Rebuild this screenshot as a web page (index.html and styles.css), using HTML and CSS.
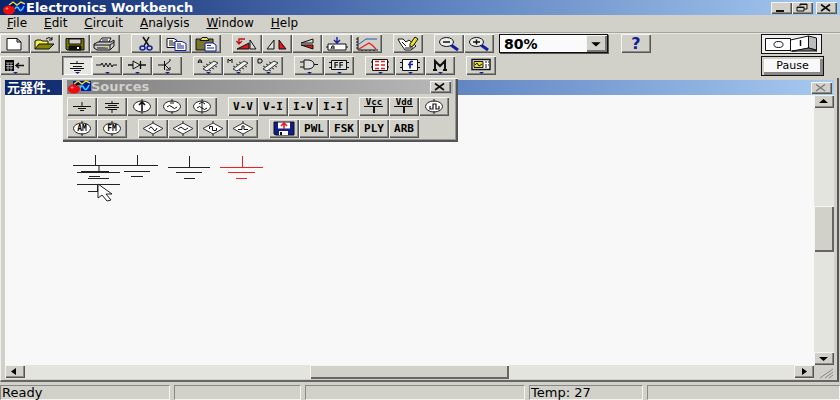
FILE: index.html
```
<!DOCTYPE html>
<html lang="en">
<head>
    <meta charset="UTF-8">
    <meta name="viewport" content="width=device-width, initial-scale=1.0">
    <title>Electronics Workbench</title>
    <link rel="stylesheet" href="styles.css">
</head>
<body>
    <svg class="defs" width="0" height="0">
        <symbol id="logo" viewBox="0 0 24 14">
            <path d="M6 1H24V11H14V5H6Z" fill="#0018a8"/>
            <path d="M7 4l4-3 4 3 4-3 4 2" fill="none" stroke="#e8e020" stroke-width="1.4"/>
            <path d="M13 8q2-4 4 0t5-3" fill="none" stroke="#30d8f0" stroke-width="1.6"/>
            <ellipse cx="7" cy="9" rx="6" ry="4.5" fill="#f00c0c"/>
            <path d="M9 5l3-2" stroke="#000" stroke-width="1.5"/>
            <ellipse cx="5" cy="7.500" rx="1.500" ry="1" fill="#ff9a8a"/>
        </symbol>
        <symbol id="nub" viewBox="0 0 30 19"><path d="M13 16h5l-2.500 2z" fill="#102090" stroke="none"/></symbol>
        <symbol id="chip" viewBox="0 0 30 19">
            <path d="M10 13l11-8 4 2-11 8z" fill="#eee" stroke="#333"/>
            <path d="M12 11l-2-1M15 9l-2-1M18 7l-2-1M16 14l2 1M19 12l2 1M22 10l2 1" fill="none" stroke="#333"/>
        </symbol>
        <symbol id="round" viewBox="0 0 30 19">
            <ellipse cx="15" cy="9.500" rx="8.500" ry="5.500" fill="#fff" stroke="#222"/>
            <path d="M15 2v3M15 14v3" stroke="#222"/>
        </symbol>
        <symbol id="diamond" viewBox="0 0 30 19">
            <path d="M5 9.500L15 4l10 5.500L15 15z" fill="#fff" stroke="#333"/>
            <path d="M15 2v2M15 15v2" stroke="#222"/>
        </symbol>
    </svg>

    <header class="titlebar">
        <svg class="logo"><use href="#logo"/></svg>
        <h1>Electronics Workbench</h1>
        <div class="window-buttons">
            <button class="small" aria-label="Minimize"><svg viewBox="0 0 20 12"><path d="M5 9h8" stroke-width="2"/></svg></button>
            <button class="small" aria-label="Restore"><svg viewBox="0 0 20 12"><path d="M8 4V2h7v5h-3M8 2.500h7M5 5h7v4H5zM5 5.500h7"/></svg></button>
            <button class="small close" aria-label="Close"><svg viewBox="0 0 20 12"><path d="M5 2.500l9 6.500M14 2.500L5 9" stroke-width="1.700"/></svg></button>
        </div>
    </header>

    <nav class="menu">
        <a href="#"><u>F</u>ile</a>
        <a href="#"><u>E</u>dit</a>
        <a href="#"><u>C</u>ircuit</a>
        <a href="#"><u>A</u>nalysis</a>
        <a href="#"><u>W</u>indow</a>
        <a href="#"><u>H</u>elp</a>
    </nav>

    <div class="toolbars">
        <div class="rows">
            <div class="bar">
                <div class="group">
                    <button class="tool" aria-label="New"><svg viewBox="0 0 30 19"><path d="M7 4.500h10l4 3.500v8H7zM17 4.500V8h4" fill="#fff"/></svg></button>
                    <button class="tool" aria-label="Open"><svg viewBox="0 0 30 19"><path d="M5 15V7l2-1h4l1 1h6v3" fill="#f4ee50"/><path d="M5 15l4-5h15l-5 5z" fill="#858500"/><path d="M16 5q3-3 6 0M22 3v3h-3"/></svg></button>
                    <button class="tool" aria-label="Save"><svg viewBox="0 0 30 19"><path d="M6 4.500h18v11.500H7l-1-1z" fill="#777700"/><path d="M9 5h12v5H9z" fill="#d4d0c8"/><path d="M9 12h12v4H9z" fill="#111"/><path d="M18 13v2" stroke="#fff" stroke-width="2"/></svg></button>
                    <button class="tool" aria-label="Print"><svg viewBox="0 0 30 19"><path d="M9 8l3-4h9l-2 4z" fill="#fff"/><path d="M4 10l4-2h13l3-2v6l-4 4H7l-3-2z" fill="#ccc"/><path d="M4 11h16l4-3M20 11v5M7 14h11M12 6h6"/><path d="M15 13h3" stroke="#d8d020"/></svg></button>
                </div>
                <div class="group">
                    <button class="tool" aria-label="Cut"><svg viewBox="0 0 30 19"><path d="M12 3l6 9M18 3l-5 9" stroke-width="1.500"/><g stroke="#1020a0" stroke-width="1.500"><ellipse cx="11.500" cy="14" rx="2.500" ry="2"/><ellipse cx="18.500" cy="14" rx="2.500" ry="2"/></g></svg></button>
                    <button class="tool" aria-label="Copy"><svg viewBox="0 0 30 19"><path d="M6 4.500h7l3 2v7H6z" fill="#fff"/><path d="M8 7h4M8 9h6M8 11h6"/><g stroke="#1020a0"><path d="M14 7.500h7l4 2v7H14z" fill="#fff"/><path d="M16 10h4M16 12h7M16 14h7"/></g></svg></button>
                    <button class="tool" aria-label="Paste"><svg viewBox="0 0 30 19"><path d="M5 5h17v11H5z" fill="#77772c"/><path d="M9 6.500h9l-2-3h-5z" fill="#e8e060"/><g stroke="#1020a0"><path d="M14 9h8l3 2v6H14z" fill="#fff"/><path d="M16 11.500h4M16 14h7"/></g></svg></button>
                </div>
                <div class="group">
                    <button class="tool" aria-label="Rotate"><svg viewBox="0 0 30 19"><path d="M5 15h12V9z" fill="#e01818"/><path d="M18 15V6l6 9z" fill="#ddd"/><path d="M13 5H7v4M4.500 7L7 10l3-3" stroke="#c01010" stroke-width="1.400"/></svg></button>
                    <button class="tool" aria-label="Flip horizontal"><svg viewBox="0 0 30 19"><path d="M5 15h7V6z" fill="#ddd"/><path d="M17 15V6l7 9z" fill="#e01818"/></svg></button>
                    <button class="tool" aria-label="Flip vertical"><svg viewBox="0 0 30 19"><path d="M9 9l12-4v4z" fill="#ddd"/><path d="M9 11h12v4z" fill="#e01818"/></svg></button>
                    <button class="tool" aria-label="Component properties"><svg viewBox="0 0 30 19"><path d="M6 10h18v6H6zM4 13h2M24 13h2" fill="#fff"/><path d="M9 15l1-3h2v3M10 14h2"/><path d="M15 3v5M12 6l3 3 3-3" stroke="#1020a0" stroke-width="1.400"/></svg></button>
                    <button class="tool" aria-label="Display graphs"><svg viewBox="0 0 30 19"><path d="M6 3v13h20M4 5h2M4 8h2M4 11h2M4 14h2M10 16v1M14 16v1M18 16v1M22 16v1"/><path d="M7 10l7-5h11" stroke="#2858b0"/><path d="M7 15l10-6 3 2 4 4" stroke="#e02020" stroke-width="1.300"/></svg></button>
                </div>
                <div class="group">
                    <button class="tool" aria-label="Create subcircuit"><svg viewBox="0 0 30 19"><path d="M5 5h5l3 3 3-2 7 6-5 4h-6l-5-7z" fill="#fff"/><path d="M9 8l4 4M12 14h8"/><path d="M17 10l5-7 3 2-5 7-3 1z" fill="#f0e020"/></svg></button>
                </div>
                <div class="group">
                    <button class="tool" aria-label="Zoom out"><svg viewBox="0 0 30 19"><path d="M17 11l7 5" stroke="#1020a0" stroke-width="3"/><ellipse cx="12.500" cy="8" rx="7" ry="4.500" fill="#eee"/><path d="M9 8h7" stroke-width="1.500"/></svg></button>
                    <button class="tool" aria-label="Zoom in"><svg viewBox="0 0 30 19"><path d="M17 11l7 5" stroke="#1020a0" stroke-width="3"/><ellipse cx="12.500" cy="8" rx="7" ry="4.500" fill="#eee"/><path d="M9 8h7M12.500 5.500v5" stroke-width="1.500"/></svg></button>
                </div>
                <div class="combo">
                    <select aria-label="Zoom level"><option>80%</option><option>100%</option></select>
                    <span class="drop"><svg viewBox="0 0 20 17"><path class="solid" d="M5 7h9l-4.500 4z"/></svg></span>
                </div>
                <button class="tool help" aria-label="Help"><b>?</b></button>
            </div>

            <div class="bar">
                <div class="group first">
                    <button class="tool" aria-label="Favorites"><svg viewBox="0 0 30 19"><path class="solid" d="M5 4h9v11H5z"/><path d="M6 7h7M6 9.500h7M6 12h7M8 7v8M11 7v8" stroke="#ccc" stroke-width=".8"/><path d="M16 9.500h8M19 7l-3 2.500 3 2.500" stroke-width="1.500"/><use href="#nub"/></svg></button>
                </div>
                <div class="group">
                    <button class="tool pressed" aria-label="Sources"><svg viewBox="0 0 30 19"><path d="M15 5v2M8 7.500h14M11 10.500h9M8 12.500h14M12 14.500h7"/><use href="#nub"/></svg></button>
                    <button class="tool" aria-label="Basic"><svg viewBox="0 0 30 19"><path d="M4 9h5l1-2 2 4 2-4 2 4 2-4 2 4 1-2h4"/><use href="#nub"/></svg></button>
                    <button class="tool" aria-label="Diodes"><svg viewBox="0 0 30 19"><path d="M6 9h6M19 9h5M18.500 5v8" stroke-width="1.300"/><path d="M11 5v8l7-4z" fill="#ddd"/><use href="#nub"/></svg></button>
                    <button class="tool" aria-label="Transistors"><svg viewBox="0 0 30 19"><path d="M6 9h6M12.500 5v9M13 9l5-4V3M13 9l4 4M14 14h4v-3"/><use href="#nub"/></svg></button>
                </div>
                <div class="group">
                    <button class="tool" aria-label="Analog ICs"><svg viewBox="0 0 30 19"><use href="#chip"/><path d="M5 7l1-3h2l1 3M5 6h4"/><use href="#nub"/></svg></button>
                    <button class="tool" aria-label="Mixed ICs"><svg viewBox="0 0 30 19"><use href="#chip"/><path d="M5 7V3l2 2 2-2v4"/><use href="#nub"/></svg></button>
                    <button class="tool" aria-label="Digital ICs"><svg viewBox="0 0 30 19"><use href="#chip"/><path d="M5 3h3l1 1v2l-1 1H5z"/><use href="#nub"/></svg></button>
                </div>
                <div class="group">
                    <button class="tool" aria-label="Logic gates"><svg viewBox="0 0 30 19"><path d="M6 6h4M6 11h4M20 8.500h4"/><path d="M10 4h5q5 1 5 4.500t-5 4.500h-5z" fill="#ddd"/><use href="#nub"/></svg></button>
                    <button class="tool" aria-label="Digital"><svg viewBox="0 0 30 19"><path d="M7.500 4.500h15v9h-15z" fill="#ddd"/><path d="M5 6.500h3M5 11.500h3M22 6.500h3M22 11.500h3M11 12V6.500h3M11 9h3M16 12V6.500h3M16 9h3" stroke-width="1.200"/><use href="#nub"/></svg></button>
                </div>
                <div class="group">
                    <button class="tool" aria-label="Indicators"><svg viewBox="0 0 30 19"><path d="M7.500 3.500h15v11h-15z" fill="#fff"/><path d="M10 5.500h4M16 5.500h4M10 9h4M16 9h4M10 12.500h4M16 12.500h4" stroke="#e02020" stroke-width="1.500"/><path d="M6 6h2M6 11h2M22 6h2M22 11h2"/><use href="#nub"/></svg></button>
                    <button class="tool" aria-label="Controls"><svg viewBox="0 0 30 19"><path d="M7.500 3.500h15v11h-15zM5 6.500h3M5 11.500h3M22 6.500h3M22 11.500h3" fill="#fff"/><path d="M18 5.500h-2l-1 1v6M13 8.500h5" stroke="#1020a0" stroke-width="1.700"/><use href="#nub"/></svg></button>
                    <button class="tool" aria-label="Miscellaneous"><svg viewBox="0 0 30 19"><path d="M10 14V5l5 5 5-5v9M8 14h4M18 14h4" stroke-width="2"/><use href="#nub"/></svg></button>
                </div>
                <div class="group">
                    <button class="tool" aria-label="Instruments"><svg viewBox="0 0 30 19"><path d="M6 3.500h18v10H6z" fill="#fff" stroke-width="1.400"/><path d="M8 5.500h9v6H8z" fill="#e8e020"/><path d="M9 9l2-2 2 3 3-2M19 6h2M22 6h1M19 9h2M22 9h1M19 11h2"/><use href="#nub"/></svg></button>
                </div>
            </div>
        </div>

        <div class="simulate">
            <button class="power" aria-label="Activate simulation">
                <svg viewBox="0 0 59 18">
                    <path d="M3.500 3.500h25v12h-25z" fill="#fff"/>
                    <path d="M28.500 5l18-4v12l-13 3h-5z" fill="#fff"/>
                    <path d="M46.500 1l8 2v12l-8-2z" fill="#bbb"/>
                    <path d="M30 16l17-3 8 3z" fill="#777"/>
                    <ellipse cx="16.500" cy="9.500" rx="4.500" ry="3"/>
                    <path d="M38.500 5v6" stroke-width="1.500"/>
                </svg>
            </button>
            <button class="pause">Pause</button>
        </div>
    </div>

    <main class="workspace">
        <section class="document">
            <div class="doc-title">
                <h2>元器件.</h2>
                <button class="small" disabled aria-label="Close document"><svg viewBox="0 0 20 12"><path d="M5 2.500l9 6.500M14 2.500L5 9" stroke="#777" stroke-width="1.300"/></svg></button>
            </div>
            <div class="doc-body">
                <div class="sheet">
                    <svg class="circuit" width="210" height="60" viewBox="70 150 210 60">
                        <path d="M95.500 155v10M137.500 155v10M73 165.500h85M99 165v7M81 171.500h28M77 172.500h43M89 176.500h11M88 178.500h21M124 171.500h26M131 176.500h12M77 184.500h43M97.500 184v7M88 191.500h10"/>
                        <path d="M189.500 156v11M168 167.500h42M176 172.500h26M184 178.500h11"/>
                        <path class="selected" d="M242.500 156v11M220 167.500h43M228 172.500h27M236 178.500h11"/>
                        <path class="cursor" d="M98 184v14l4-3 5 6 4-1-5-6h6z"/>
                    </svg>
                </div>
                <div class="vscroll">
                    <button class="arrow" aria-label="Scroll up"><svg viewBox="0 0 20 13"><path class="solid" d="M5 8h9L9.500 4z"/></svg></button>
                    <div class="track"><div class="thumb"></div></div>
                    <button class="arrow" aria-label="Scroll down"><svg viewBox="0 0 20 13"><path class="solid" d="M5 5h9L9.500 9z"/></svg></button>
                </div>
                <div class="hscroll">
                    <button class="arrow" aria-label="Scroll left"><svg viewBox="0 0 20 13"><path class="solid" d="M11 3v7L6 6.500z"/></svg></button>
                    <div class="track"><div class="thumb"></div></div>
                    <button class="arrow" aria-label="Scroll right"><svg viewBox="0 0 20 13"><path class="solid" d="M8 3v7l5-3.500z"/></svg></button>
                </div>
                <svg class="grip" viewBox="0 0 20 14"><path d="M6 13L19 4M11 13l8-6M15 13l4-3"/></svg>
            </div>
        </section>

        <!-- floating parts bin -->
        <section class="palette">
            <div class="palette-title">
                <svg class="logo"><use href="#logo"/></svg>
                <h2>Sources</h2>
                <button class="small" aria-label="Close Sources"><svg viewBox="0 0 20 12"><path d="M5 2.500l9 6.500M14 2.500L5 9" stroke-width="1.700"/></svg></button>
            </div>
            <div class="bar">
                <div class="group">
                    <button class="tool" aria-label="Ground"><svg viewBox="0 0 30 19"><path d="M15 5v5M6 9.500h18M11 11.500h8M13 13.500h4"/></svg></button>
                    <button class="tool" aria-label="Battery"><svg viewBox="0 0 30 19"><path d="M15 4v2M8 6.500h14M11 8.500h9M8 10.500h14M11 12.500h9M15 13v3"/></svg></button>
                    <button class="tool" aria-label="DC current source"><svg viewBox="0 0 30 19"><use href="#round"/><path d="M15 14V5M12 8l3-3 3 3" stroke-width="1.600"/></svg></button>
                    <button class="tool" aria-label="AC voltage source"><svg viewBox="0 0 30 19"><use href="#round"/><path d="M10 10q2.500-3 5 0t5 0M13 6h4"/></svg></button>
                    <button class="tool" aria-label="AC current source"><svg viewBox="0 0 30 19"><use href="#round"/><path d="M15 14V5M12 7l3-2 3 2M10 11q2.500-3 5 0t5 0"/></svg></button>
                </div>
                <div class="group">
                    <button class="tool">V-V</button>
                    <button class="tool">V-I</button>
                    <button class="tool">I-V</button>
                    <button class="tool">I-I</button>
                </div>
                <div class="group">
                    <button class="tool supply"><span>Vcc</span></button>
                    <button class="tool supply"><span>Vdd</span></button>
                    <button class="tool" aria-label="Clock"><svg viewBox="0 0 30 19"><use href="#round"/><path d="M11 9v3h3V7h3v5h3V9" stroke-width="1.200"/></svg></button>
                </div>
            </div>
            <div class="bar">
                <div class="group">
                    <button class="tool modulated"><svg viewBox="0 0 30 19"><use href="#round"/></svg><span>AM</span></button>
                    <button class="tool modulated"><svg viewBox="0 0 30 19"><use href="#round"/></svg><span>FM</span></button>
                </div>
                <div class="group">
                    <button class="tool" aria-label="Voltage controlled sine wave"><svg viewBox="0 0 30 19"><use href="#diamond"/><path d="M11 10q2-4 4 0t4-1"/></svg></button>
                    <button class="tool" aria-label="Voltage controlled triangle wave"><svg viewBox="0 0 30 19"><use href="#diamond"/><path d="M10 10l3-2 4 3 3-2"/></svg></button>
                    <button class="tool" aria-label="Voltage controlled square wave"><svg viewBox="0 0 30 19"><use href="#diamond"/><path d="M11.500 10V7.500h3v4h4V9"/></svg></button>
                    <button class="tool" aria-label="Controlled one-shot"><svg viewBox="0 0 30 19"><use href="#diamond"/><path d="M10 10.500h4V7h2v3.500h4"/></svg></button>
                </div>
                <div class="group">
                    <button class="tool" aria-label="Piecewise linear source"><svg viewBox="0 0 30 19"><path d="M5 3h20v13H7l-2-1z" fill="#101c88"/><path class="white" d="M9 3.500h12v6H9z"/><path class="white" d="M10 12h9v4h-9z"/><path d="M12 13v3" stroke-width="2"/><path d="M15 10V4M12 7l3-3 3 3" stroke="#f01818" stroke-width="1.600"/></svg></button>
                    <button class="tool">PWL</button>
                    <button class="tool">FSK</button>
                    <button class="tool">PLY</button>
                    <button class="tool">ARB</button>
                </div>
            </div>
        </section>
    </main>

    <footer class="status">
        <div>Ready</div>
        <div></div>
        <div></div>
        <div>Temp: 27</div>
        <div></div>
    </footer>
</body>
</html>
```
FILE: styles.css
```
* {
    box-sizing: border-box;
}

body {
    margin: 0;
    height: 100vh;
    display: flex;
    flex-direction: column;
    overflow: hidden;
    background: #d1d0c9;
    color: #000;
    font: 12px "DejaVu Sans", "Noto Sans CJK SC", sans-serif;
}

h1, h2 {
    margin: 0;
    font-size: 13px;
    line-height: 14px;
    font-weight: bold;
}

svg {
    display: block;
    fill: none;
    stroke: #111;
}

button {
    padding: 0;
    border: 0;
    color: #000;
    background: #d1d0c9;
    font-family: inherit;
    box-shadow: inset 1px 1px #f4f4f0, inset -1px -1px #555, inset -2px -2px #8b8b88;
}

.defs {
    position: absolute;
}

.solid {
    fill: #000;
    stroke: none;
}

.white {
    fill: #fff;
    stroke: none;
}

.logo {
    width: 24px;
    height: 14px;
    stroke: none;
}

/* title and menu */
.titlebar {
    display: flex;
    align-items: center;
    height: 15px;
    padding: 0 3px 0 2px;
    color: #fff;
    background: linear-gradient(to right, #0a246a, #5b7fbd 50%, #a6caf0);
}

.window-buttons {
    display: flex;
    margin-left: auto;
}

.small {
    width: 21px;
    height: 12px;
}

.small svg {
    width: 20px;
    height: 12px;
}

.close {
    margin-left: 3px;
}

.menu {
    display: flex;
    gap: 17px;
    height: 17px;
    padding: 0 7px;
    line-height: 17px;
}

.menu a {
    color: #000;
    text-decoration: none;
}

/* toolbars */
.toolbars {
    display: flex;
    justify-content: space-between;
    padding: 1px 16px 2px 0;
    border-top: 1px solid #a5a5a0;
    box-shadow: inset 0 1px #e8e8e4;
}

.rows {
    display: flex;
    flex-direction: column;
    gap: 3px;
}

.bar {
    display: flex;
    align-items: center;
    gap: 11px;
    height: 19px;
}

.group {
    display: flex;
}

.tool {
    width: 30px;
    height: 19px;
    font: bold 11px "DejaVu Sans Mono", monospace;
}

.tool svg {
    width: 30px;
    height: 19px;
}

.first {
    margin-right: 21px;
}

.pressed {
    background: #e6e6e2;
    box-shadow: inset 1px 1px #555, inset 2px 2px #999, inset -1px -1px #fff;
}

.combo {
    display: flex;
    width: 109px;
    height: 19px;
    margin-left: -6px;
    border: 1px solid #111;
    background: #fafafa;
    box-shadow: 1px 1px #555;
}

.combo select {
    flex: 1;
    padding: 0 0 0 4px;
    border: 0;
    appearance: none;
    background: none;
    color: #000;
    font: bold 14px "DejaVu Sans", sans-serif;
}

.drop {
    width: 21px;
    background: #d1d0c9;
    box-shadow: inset 1px 1px #f4f4f0, inset -2px -2px #777;
}

.help {
    margin-left: 2px;
}

.help b {
    color: #101c98;
    font: bold 16px/18px "DejaVu Sans", sans-serif;
}

.simulate {
    display: flex;
    flex-direction: column;
    align-items: flex-start;
    gap: 2px;
}

.power {
    width: 61px;
    height: 20px;
    border: 1px solid #111;
    background: #eee;
    box-shadow: none;
}

.power svg {
    width: 59px;
    height: 18px;
}

.pause {
    width: 63px;
    height: 20px;
    border: 1px solid #111;
    background: #f8f8f8;
    font-size: 11px;
    line-height: 16px;
    box-shadow: inset 2px 2px #d1d0c9, inset -3px -3px #888;
}

/* document window */
.workspace {
    position: relative;
    flex: 1;
    min-height: 0;
    display: flex;
}

.document {
    flex: 1;
    min-width: 0;
    display: flex;
    flex-direction: column;
    padding: 2px 3px 1px 4px;
    margin-right: 1px;
    border-left: 1px solid #f0f0ec;
    border-right: 2px solid #555;
    border-bottom: 2px solid #666;
}

.doc-title {
    display: flex;
    align-items: center;
    justify-content: space-between;
    height: 15px;
    padding: 0 2px;
    color: #fff;
    background: linear-gradient(to right, #0a246a, #5b7fbd 50%, #a6caf0);
}

.doc-body {
    flex: 1;
    min-height: 0;
    display: grid;
    grid-template-columns: 1fr 20px;
    grid-template-rows: 1fr 14px;
}

.sheet {
    position: relative;
    background: #f8f8f8;
}

.circuit {
    position: absolute;
    left: 65px;
    top: 55px;
}

.circuit path {
    stroke: #222;
}

.circuit .selected {
    stroke: #f02020;
}

.circuit .cursor {
    fill: #fff;
}

.vscroll, .hscroll {
    display: flex;
    background: #e4e4df;
}

.vscroll {
    flex-direction: column;
}

.track {
    flex: 1;
    display: flex;
}

.vscroll .track {
    flex-direction: column;
}

.track::before {
    content: "";
}

.thumb {
    background: #d1d0c9;
    box-shadow: inset 1px 1px #f4f4f0, inset -2px -2px #666;
}

.vscroll .track::before {
    height: 40%;
}

.vscroll .thumb {
    height: 19%;
}

.hscroll .track::before {
    width: 37%;
}

.hscroll .thumb {
    width: 26%;
}

.arrow {
    flex: none;
    width: 20px;
    height: 13px;
}

.arrow svg {
    width: 20px;
    height: 13px;
}

.grip {
    width: 20px;
    height: 14px;
    background: #d1d0c9;
    stroke: #888;
}

/* floating Sources palette */
.palette {
    position: absolute;
    left: 62px;
    top: 0;
    display: flex;
    flex-direction: column;
    gap: 3px;
    width: 396px;
    padding: 2px 5px 4px;
    background: #d1d0c9;
    box-shadow: inset 1px 1px #f4f4f0, inset -2px -2px #555, inset -3px -3px #999;
}

.palette-title {
    display: flex;
    align-items: center;
    height: 14px;
    color: #d1d0c9;
    background: linear-gradient(to right, #808080, #b8b8b8);
}

.palette-title .small {
    margin-left: auto;
    margin-right: 2px;
}

.supply {
    background-image: linear-gradient(#111, #111), linear-gradient(#111, #111);
    background-repeat: no-repeat;
    background-size: 19px 1px, 2px 7px;
    background-position: 5px 9px, 14px 9px;
}

.supply span {
    display: block;
    height: 17px;
    font-size: 9px;
    line-height: 9px;
}

/* letters drawn inside the source circle */
.modulated {
    display: grid;
    place-items: center;
    font-size: 8px;
}

.modulated svg, .modulated span {
    grid-area: 1 / 1;
}

/* status bar */
.status {
    display: grid;
    grid-template-columns: 170fr 127fr 220fr 114fr 193fr;
    gap: 4px;
    height: 18px;
    padding: 3px 0 1px;
    font-size: 13px;
    line-height: 13px;
}

.status div {
    padding-left: 1px;
    border: 1px solid;
    border-color: #888 #f4f4f0 #f4f4f0 #888;
    white-space: nowrap;
}
```
